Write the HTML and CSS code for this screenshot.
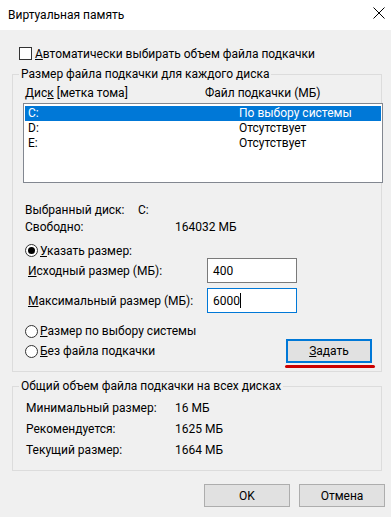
FILE: index.html
```html
<!DOCTYPE html>
<html lang="ru">
<head>
<meta charset="utf-8">
<title>Виртуальная память</title>
<link rel="stylesheet" href="styles.css">
</head>
<body>
<div class="window">
  <div class="titlebar">
    <span class="title">Виртуальная память</span>
    <svg class="close" width="12" height="12" viewBox="0 0 12 12"><path d="M0.5 0.5L11.5 11.5M11.5 0.5L0.5 11.5" stroke="#000" stroke-width="1" fill="none"/></svg>
  </div>
  <div class="content">
    <div class="check-row"><span class="checkbox"></span><span><u>А</u>втоматически выбирать объем файла подкачки</span></div>

    <fieldset class="group group-disks">
      <legend>Размер файла подкачки для каждого диска</legend>
      <div class="list-head"><span class="head-col1">Дис<u>к</u> [метка тома]</span><span>Файл подкачки (МБ)</span></div>
      <div class="listbox">
        <div class="list-row selected"><span class="row-col1">C:</span><span>По выбору системы</span></div>
        <div class="list-row"><span class="row-col1">D:</span><span>Отсутствует</span></div>
        <div class="list-row"><span class="row-col1">E:</span><span>Отсутствует</span></div>
      </div>
      <div class="info-row first-info"><span class="info-w1">Выбранный диск:</span><span>C:</span></div>
      <div class="info-row"><span class="info-w2">Свободно:</span><span>164032 МБ</span></div>
      <div class="radio-row specify"><span class="radio checked"></span><span><u>У</u>казать размер:</span></div>
      <div class="field-row"><span class="field-label"><u>И</u>сходный размер (МБ):</span><div class="field">400</div></div>
      <div class="field-row second"><span class="field-label"><u>М</u>аксимальный размер (МБ):</span><div class="field focused">6000<span class="caret"></span></div></div>
      <div class="radio-row system"><span class="radio"></span><span><u>Р</u>азмер по выбору системы</span></div>
      <div class="radio-row nofile"><span class="radio"></span><span><u>Б</u>ез файла подкачки</span><button class="btn btn-set"><u>З</u>адать</button></div>
    </fieldset>

    <fieldset class="group group-total">
      <legend>Общий объем файла подкачки на всех дисках</legend>
      <div class="total-row first-total"><span class="total-label">Минимальный размер:</span><span>16 МБ</span></div>
      <div class="total-row"><span class="total-label">Рекомендуется:</span><span>1625 МБ</span></div>
      <div class="total-row"><span class="total-label">Текущий размер:</span><span>1664 МБ</span></div>
    </fieldset>

    <div class="actions"><button class="btn">OK</button><button class="btn">Отмена</button></div>
  </div>
</div>
</body>
</html>
```

FILE: styles.css
```css
* { box-sizing: border-box; }
body {
  margin: 0;
  font-family: Roboto, "Noto Sans", sans-serif;
  font-size: 12px;
  color: #000;
}
u { text-decoration: underline; text-underline-offset: 1px; }
.window {
  width: 391px;
  height: 517px;
  background: #f0f0f0;
  overflow: hidden;
}
.titlebar {
  height: 30px;
  background: #fff;
  display: flex;
  justify-content: space-between;
  align-items: center;
  padding: 0 6px 0 8px;
  line-height: 16px;
}
.close { align-self: flex-start; margin-top: 7px; }

.check-row {
  display: flex;
  align-items: center;
  height: 13px;
  margin: 17px 0 0 19px;
  line-height: 16px;
}
.checkbox {
  width: 13px;
  height: 13px;
  border: 1px solid #333;
  background: #fff;
  margin-right: 3px;
  flex: none;
}

.group {
  margin: 6px 0 0 12px;
  width: 370px;
  padding: 0 0 8px 0;
  border: 1px solid #dcdcdc;
  min-width: 0;
}
.group legend {
  margin-left: 6px;
  padding: 0 2px;
  line-height: 16px;
}

.list-head {
  display: flex;
  margin: 3px 0 0 12px;
  line-height: 16px;
}
.head-col1 { width: 180px; }
.listbox {
  margin: 2px 0 0 10px;
  width: 360px;
  height: 80px;
  border: 1px solid #828790;
  background: #fff;
  padding: 2px 1px;
}
.list-row {
  display: flex;
  height: 15px;
  line-height: 15px;
  padding-left: 3px;
}
.row-col1 { width: 211px; }
.list-row.selected { background: #0078d7; color: #fff; }

.info-row {
  display: flex;
  line-height: 17px;
  margin-left: 12px;
}
.first-info { margin-top: 19px; }
.info-w1 { width: 113px; }
.info-w2 { width: 150px; }

.radio-row {
  display: flex;
  align-items: center;
  margin-left: 12px;
  line-height: 16px;
}
.radio {
  width: 13px;
  height: 13px;
  border: 1px solid #333;
  border-radius: 50%;
  background: #fff;
  margin-right: 2px;
  display: flex;
  align-items: center;
  justify-content: center;
  flex: none;
}
.radio.checked::after {
  content: "";
  width: 7px;
  height: 7px;
  border-radius: 50%;
  background: #000;
}
.specify { height: 15px; margin-top: 7px; }

.field-row {
  display: flex;
  align-items: center;
  height: 25px;
  margin-left: 15px;
}
.field-row.second { margin-top: 5px; }
.field-label { width: 179px; }
.field {
  width: 90px;
  height: 25px;
  border: 1px solid #7a7a7a;
  background: #fff;
  padding-left: 5px;
  display: flex;
  align-items: center;
}
.field.focused { border-color: #0078d7; }
.caret {
  display: inline-block;
  width: 1px;
  height: 15px;
  background: #000;
}
.system { margin-top: 10px; }
.nofile { height: 24px; }

.btn {
  font: inherit;
  color: #000;
  background: #e1e1e1;
  border: 1px solid #adadad;
  width: 86px;
  height: 23px;
  padding: 0;
}
.btn-set {
  margin-left: auto;
  margin-right: 9px;
  height: 24px;
  border: 2px solid #0078d7;
  position: relative;
}
.btn-set::after {
  content: "";
  position: absolute;
  left: -3px;
  top: 24px;
  width: 90px;
  height: 3px;
  border-radius: 2px;
  background: #cc0000;
}

.group-total { padding-bottom: 9px; }
.total-row {
  display: flex;
  height: 21px;
  line-height: 21px;
  margin-left: 13px;
}
.first-total { margin-top: 4px; }
.total-label { width: 149px; }

.actions {
  display: flex;
  justify-content: flex-end;
  gap: 9px;
  padding-right: 6px;
  margin-top: 13px;
}
```
